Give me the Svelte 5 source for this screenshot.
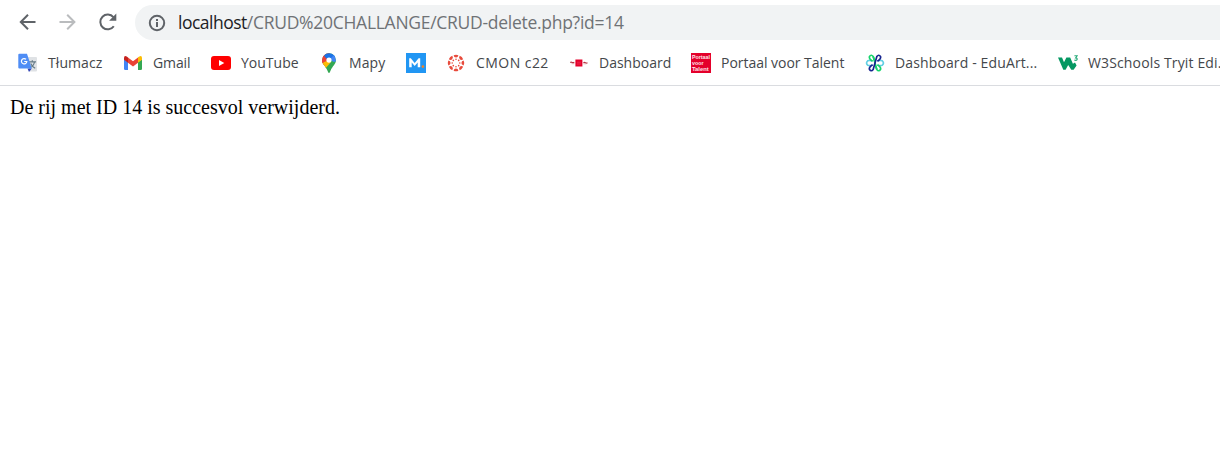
<script>
  const bookmarks = [
    { icon: 'translate', label: 'Tłumacz', width: 55, spacing: 0.08 },
    { icon: 'gmail', label: 'Gmail', width: 38, spacing: -0.1 },
    { icon: 'youtube', label: 'YouTube', width: 58, spacing: 0 },
    { icon: 'maps', label: 'Mapy', width: 37, spacing: 0.1 },
    { icon: 'magister', label: '', width: 0, spacing: 0 },
    { icon: 'canvas', label: 'CMON c22', width: 73, spacing: 0.45 },
    { icon: 'dash', label: 'Dashboard', width: 72, spacing: 0 },
    { icon: 'portaal', label: 'Portaal voor Talent', width: 124, spacing: -0.03 },
    { icon: 'edu', label: 'Dashboard - EduArt...', width: 143, spacing: 0.13 },
    { icon: 'w3', label: 'W3Schools Tryit Edi...', width: 142, spacing: 0.14 }
  ];
  const spokes = [0, 45, 90, 135, 180, 225, 270, 315];
</script>

<div class="browser">
  <div class="toolbar">
    <svg class="nav" viewBox="0 0 20 20"><path d="M17.5 10H3M10 2.8 2.8 10l7.2 7.2" fill="none" stroke="#5f6368" stroke-width="2" /></svg>
    <svg class="nav" viewBox="0 0 20 20"><path d="M1.5 10h15M9.2 2.8 16.4 10l-7.2 7.2" fill="none" stroke="#babcbe" stroke-width="2" /></svg>
    <svg class="nav" viewBox="0 0 20 20"><path d="M15.8 14.2a7.4 7.4 0 1 1-.4-9" fill="none" stroke="#5f6368" stroke-width="2" /><path d="M18.3 1.6v7.2h-7.2z" fill="#5f6368" /></svg>
    <div class="address">
      <svg class="info" viewBox="0 0 18 18"><circle cx="9" cy="9" r="7.2" fill="none" stroke="#5f6368" stroke-width="2" /><path d="M8 8h2v5H8zM8 5h2v2H8z" fill="#5f6368" /></svg>
      <span class="url"><b>localhost</b>/CRUD%20CHALLANGE/CRUD-delete.php?id=14</span>
    </div>
  </div>

  <div class="bookmarks">
    {#each bookmarks as item}
      <div class="bookmark">
        <svg class="icon" viewBox="0 0 20 20">
          {#if item.icon === 'translate'}
            <path d="M8 4h10q1 0 1 1v12.5q0 1-1 1h-6z" fill="#dfe2e5" />
            <path d="M11 8.8h7M14.3 7.3v1.5M16.5 9c-.6 3-2.5 5-5 6M12.7 10.5c.8 2 2.4 3.6 4.5 4.7" stroke="#667b87" stroke-width="1.2" fill="none" />
            <path d="M9.5 15.5h4.3L11 19z" fill="#3144b5" />
            <path d="M1.3.8H9l4.8 14.7H1.3q-1 0-1-1V1.8q0-1 1-1z" fill="#4f8df5" />
            <path d="M8 6.3a2.7 2.7 0 1 0 .8 2.2H6.2" fill="none" stroke="#fff" stroke-width="1.2" />
          {:else if item.icon === 'gmail'}
            <path d="M1 6.2 5 9v8H2.3Q1 17 1 15.7z" fill="#4285f4" />
            <path d="m15 9 4-2.8v9.5q0 1.3-1.3 1.3H15z" fill="#34a853" />
            <path d="M15 4.3 16.3 3.4Q19 2.3 19 5v1.7L15 9.7z" fill="#fbbc04" />
            <path d="m5 4.5 5 3.8 5-3.8v5.2l-5 3.8-5-3.8z" fill="#ea4335" />
            <path d="M5 4.5 3.7 3.4Q1 2.3 1 5v1.7l4 3z" fill="#c5221f" />
          {:else if item.icon === 'youtube'}
            <rect y="3" width="20" height="14" rx="3" fill="#f00" />
            <path d="m8 7 5.3 3L8 13z" fill="#fff" />
          {:else if item.icon === 'maps'}
            <clipPath id="pin"><path d="M10 .3a6.9 6.9 0 0 1 6.9 6.9c0 4.2-3.4 5.5-5.4 10.6Q10.8 20 10 20t-1.5-2.2C6.5 12.7 3.1 11.4 3.1 7.2A6.9 6.9 0 0 1 10 .3z" /></clipPath>
            <g clip-path="url(#pin)">
              <path d="M0 0h20v20H0z" fill="#34a853" />
              <path d="M0 0h10.5l1.5 5-7 7.5-5-2z" fill="#ea4335" />
              <path d="M7 0h13L10 10 5 3z" fill="#1a73e8" />
              <path d="m12 5 4-4 4 6-5 2-2-1z" fill="#4285f4" />
              <path d="m8 8 4 1-6 7-4-6z" fill="#fbbc04" />
              <path d="M2 2.5 4.7 3 8 6 3 11 0 9z" fill="#ea4335" />
            </g>
            <circle cx="10" cy="7.1" r="2.6" fill="#fff" />
          {:else if item.icon === 'magister'}
            <path d="M0 0h20v20H0z" fill="#2196f3" />
            <path d="M3.2 14.3V5.2h1.6l3.9 4.7 3.9-4.7h1.6v9.1h-2.5V9.5l-3 3.6-3-3.6v4.8z" fill="#fff" />
            <circle cx="16.9" cy="13.6" r="1.3" fill="#f58220" />
          {:else if item.icon === 'canvas'}
            {#each spokes as angle}
              <g transform="rotate({angle} 10 10)" fill="#e84b3c">
                <path d="M7.6 2.3Q10 1.3 12.4 2.3 12 4.6 10 4.6T7.6 2.3z" />
                <circle cx="10" cy="6.2" r=".8" />
              </g>
            {/each}
          {:else if item.icon === 'dash'}
            <path d="M6.4 6.5h7v7h-7z" fill="#e4002b" />
            <path d="M8 9.2h4M8 11h4" stroke="#ee4560" stroke-width=".6" />
            <path d="M1.2 9.4q1-.6 2 0t2.1 0M14.4 9.7q1-.7 2 0t2.1 0" fill="none" stroke="#b73443" stroke-width="1.2" />
            <path d="M2.5 10.7h2.8M14.4 10.8h3" stroke="#db9a9c" stroke-width=".7" />
          {:else if item.icon === 'portaal'}
            <path d="M0 0h20v20H0z" fill="#e4002b" />
            <g class="tile">
              <text x="1" y="6.2" textLength="18" lengthAdjust="spacingAndGlyphs">Portaal</text>
              <text x="1" y="12" textLength="11.5" lengthAdjust="spacingAndGlyphs">voor</text>
              <text x="1" y="17.8" textLength="16.7" lengthAdjust="spacingAndGlyphs">Talent</text>
            </g>
          {:else if item.icon === 'edu'}
            <g fill="none" stroke-width="1.7">
              <path d="M7.5 8.1Q5 6.9 2.7 7.8.4 10 2.7 12.2q2.3.9 4.8-.3M12.5 8.1q2.5-1.2 4.8-.3 2.3 2.2 0 4.4-2.3.9-4.8-.3" stroke="#62cfe3" />
              <path d="M7.6 8.2Q3.6 5.7 4.5 3.4 6.2 1 8.2 3.6L9.8 7.8M12.4 11.8q4 2.5 3.1 4.8-1.7 2.4-3.7-.2l-1.6-4.2" stroke="#17d46c" />
              <path d="M8.2 3.6 11.8 16.4" stroke="#17d46c" />
              <path d="M12.4 8.2q4-2.5 3.1-4.8-1.7-2.4-3.7.2L8.2 16.4q-2 2.6-3.7.2-.9-2.3 3.1-4.8" stroke="#17248f" />
            </g>
          {:else}
            <path d="M0 4.5h4l2 4.7 2.4-4.7h3.8l2.7 6.2 2.1-1.2 1.6 2.9-3 4.3h-2.3L10.2 12l-2.6 4.7H5.3z" fill="#059862" />
            <path d="M16.4 2.8h2.7l-1.5 2.1q2 .1 1.5 1.8-.9 1.2-2.8.3" stroke="#27aa79" stroke-width="1.1" fill="none" />
          {/if}
        </svg>
        {#if item.label}
          <span class="label" style="width:{item.width}px;letter-spacing:{item.spacing}px">{item.label}</span>
        {/if}
      </div>
    {/each}
  </div>
  <main>De rij met ID 14 is succesvol verwijderd.</main>
</div>

<style>
  :global(body) { margin: 0; background: #fff; }
  .browser { width: 100%; height: 455px; overflow: hidden; background: #fff; }
  .toolbar { display: flex; align-items: center; gap: 20px; height: 45px; padding-left: 18px; box-sizing: border-box; }
  .nav { width: 20px; height: 20px; flex: none; margin-bottom: 1px; }
  .address { display: flex; align-items: center; flex: 1; height: 35px; margin-left: -3px; padding-left: 13px; border-radius: 18px 0 0 18px; background: #f1f3f4; gap: 12px; }
  .info { width: 18px; height: 18px; flex: none; }
  .url { font: 400 17.5px/35px "Open Sans", sans-serif; letter-spacing: -0.28px; color: #6f7276; white-space: nowrap; }
  .url b { font-weight: 400; letter-spacing: -0.5px; color: #202124; }
  .bookmarks { display: flex; align-items: center; gap: 20px; height: 36px; padding: 0 0 4px 18px; border-bottom: 1px solid #dadce0; overflow: hidden; }
  .bookmark { display: flex; align-items: center; flex: none; gap: 10px; height: 36px; }
  .icon { width: 20px; height: 20px; flex: none; }
  .tile { fill: #ffe3e8; font: 600 5.6px/1 "Liberation Sans", sans-serif; }
  .label { font: 400 14px/20px "Open Sans", sans-serif; color: #44474b; white-space: nowrap; }
  main { padding: 10px; font: 20px/23px "Liberation Serif", serif; color: #000; }
</style>
